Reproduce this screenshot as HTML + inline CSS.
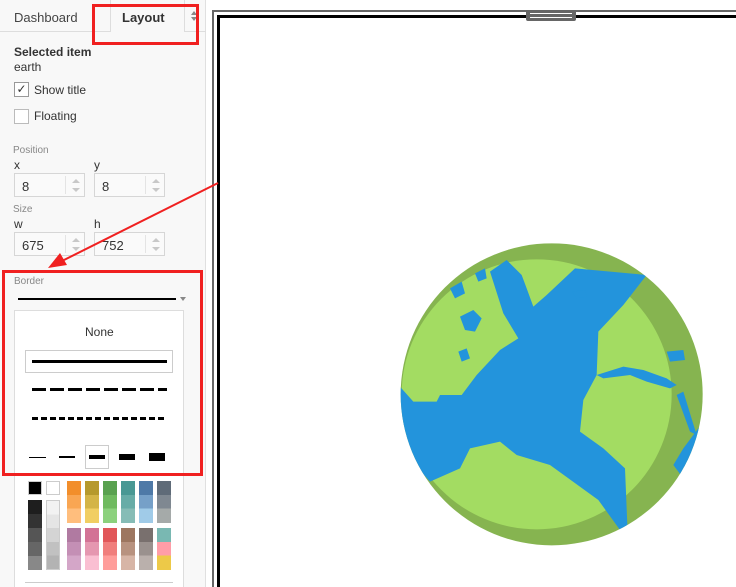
<!DOCTYPE html>
<html><head><style>
*{margin:0;padding:0;box-sizing:border-box}
html,body{width:736px;height:587px;overflow:hidden}
body{background:#fff;font-family:"Liberation Sans",sans-serif;position:relative;color:#333}
.a{position:absolute}
.sb{left:0;top:0;width:206px;height:587px;background:#f8f8f8;border-right:1px solid #e0e0e0}
.inp{position:absolute;width:71px;height:24px;border:1px solid #d6d6d6;background:#fafafa;font-size:13px;padding:5px 0 0 7px;color:#333}
.inp:after{content:"";position:absolute;left:50px;top:2px;width:1px;height:18px;background:#e4e4e4}
.up,.dn{position:absolute;left:57px;width:0;height:0;border-left:4px solid transparent;border-right:4px solid transparent}
.up{top:5px;border-bottom:4px solid #c8c8c8}.dn{top:14px;border-top:4px solid #c8c8c8}
.sw{position:absolute;width:14px}
</style></head><body>
<div class="a sb"></div>
<div class="a" style="left:0;top:0;width:206px;height:32px;border-bottom:1px solid #ddd"></div>
<div class="a" style="left:110px;top:0;width:75px;height:32px;border-left:1px solid #ddd;border-right:1px solid #ddd;background:#f8f8f8"></div>
<div class="a" style="left:14px;top:10px;font-size:13px;color:#444">Dashboard</div>
<div class="a" style="left:122px;top:10px;font-size:13px;font-weight:bold;color:#333">Layout</div>
<div class="a" style="left:191px;top:11px;width:0;border-left:3px solid transparent;border-right:3px solid transparent;border-bottom:4px solid #888"></div>
<div class="a" style="left:191px;top:17px;width:0;border-left:3px solid transparent;border-right:3px solid transparent;border-top:4px solid #888"></div>
<div class="a" style="left:92px;top:4px;width:107px;height:41px;border:3px solid #f02020"></div>

<div class="a" style="left:14px;top:45px;font-size:12px;font-weight:bold;color:#333">Selected item</div>
<div class="a" style="left:14px;top:60px;font-size:12px;color:#333">earth</div>
<div class="a" style="left:14px;top:82px;width:15px;height:15px;border:1px solid #999;background:#fff;font-size:12px;line-height:13px;text-align:center">✓</div>
<div class="a" style="left:34px;top:83px;font-size:12px">Show title</div>
<div class="a" style="left:14px;top:109px;width:15px;height:15px;border:1px solid #bbb;background:#fff"></div>
<div class="a" style="left:34px;top:109px;font-size:12px">Floating</div>
<div class="a" style="left:13px;top:145px;font-size:10px;color:#888">Position</div>
<div class="a" style="left:14px;top:158px;font-size:12px">x</div>
<div class="a" style="left:94px;top:158px;font-size:12px">y</div>
<div class="inp" style="left:14px;top:173px">8<i class="up"></i><i class="dn"></i></div>
<div class="inp" style="left:94px;top:173px">8<i class="up"></i><i class="dn"></i></div>
<div class="a" style="left:13px;top:204px;font-size:10px;color:#888">Size</div>
<div class="a" style="left:14px;top:217px;font-size:12px">w</div>
<div class="a" style="left:94px;top:217px;font-size:12px">h</div>
<div class="inp" style="left:14px;top:232px">675<i class="up"></i><i class="dn"></i></div>
<div class="inp" style="left:94px;top:232px">752<i class="up"></i><i class="dn"></i></div>

<div class="a" style="left:14px;top:276px;font-size:10px;color:#888">Border</div>
<div class="a" style="left:18px;top:298px;width:158px;height:2px;background:#000"></div>
<div class="a" style="left:180px;top:297px;width:0;border-left:3px solid transparent;border-right:3px solid transparent;border-top:4px solid #888"></div>
<div class="a" style="left:14px;top:310px;width:170px;height:290px;background:#fff;border:1px solid #ddd"></div>
<div class="a" style="left:85px;top:325px;font-size:12px;color:#333">None</div>
<div class="a" style="left:25px;top:350px;width:148px;height:23px;border:1px solid #ccc"></div>
<div class="a" style="left:32px;top:360px;width:135px;height:3px;background:#000"></div>
<div class="a" style="left:32px;top:388px;width:135px;height:3px;background:repeating-linear-gradient(90deg,#000 0 14px,transparent 14px 18px)"></div>
<div class="a" style="left:32px;top:417px;width:133px;height:3px;background:repeating-linear-gradient(90deg,#000 0 6px,transparent 6px 9px)"></div>
<div class="a" style="left:29px;top:457px;width:17px;height:1px;background:#000"></div>
<div class="a" style="left:59px;top:456px;width:16px;height:2px;background:#000"></div>
<div class="a" style="left:85px;top:445px;width:24px;height:24px;border:1px solid #ccc"></div>
<div class="a" style="left:89px;top:455px;width:16px;height:4px;background:#000"></div>
<div class="a" style="left:119px;top:454px;width:16px;height:6px;background:#000"></div>
<div class="a" style="left:149px;top:453px;width:16px;height:8px;background:#000"></div>
<div class="a" style="left:2px;top:270px;width:201px;height:206px;border:3px solid #f02020"></div>

<div class="sw" style="left:28px;top:481px;height:14px;background:#000;border:1px solid #ccc"></div>
<div class="sw" style="left:46px;top:481px;height:14px;background:#fff;border:1px solid #ccc"></div>
<div class="a" style="left:28px;top:500px;width:14px;height:70px;background:linear-gradient(#1e1e1e 0 20%,#333 20% 40%,#555 40% 60%,#666 60% 80%,#888 80%)"></div>
<div class="a" style="left:46px;top:500px;width:14px;height:70px;border:1px solid #ccc;background:linear-gradient(#f2f2f2 0 20%,#e5e5e5 20% 40%,#d4d4d4 40% 60%,#c1c1c1 60% 80%,#b3b3b3 80%)"></div>
<div class="sw" style="left:67px;top:481px;height:42px;background:linear-gradient(#f28e2b 0 33%,#f9a653 33% 66%,#ffbe7d 66%)"></div>
<div class="sw" style="left:85px;top:481px;height:42px;background:linear-gradient(#b6992d 0 33%,#d4b447 33% 66%,#f1ce63 66%)"></div>
<div class="sw" style="left:103px;top:481px;height:42px;background:linear-gradient(#59a14f 0 33%,#6fba5f 33% 66%,#8cd17d 66%)"></div>
<div class="sw" style="left:121px;top:481px;height:42px;background:linear-gradient(#499894 0 33%,#67aca7 33% 66%,#86bcb6 66%)"></div>
<div class="sw" style="left:139px;top:481px;height:42px;background:linear-gradient(#4e79a7 0 33%,#76a0c8 33% 66%,#a0cbe8 66%)"></div>
<div class="sw" style="left:157px;top:481px;height:42px;background:linear-gradient(#5f6b78 0 33%,#7f8891 33% 66%,#a5aaa9 66%)"></div>
<div class="sw" style="left:67px;top:528px;height:42px;background:linear-gradient(#b07aa1 0 33%,#c48fb5 33% 66%,#d4a6c8 66%)"></div>
<div class="sw" style="left:85px;top:528px;height:42px;background:linear-gradient(#d37295 0 33%,#e597b0 33% 66%,#fabfd2 66%)"></div>
<div class="sw" style="left:103px;top:528px;height:42px;background:linear-gradient(#e15759 0 33%,#f07e7c 33% 66%,#ff9d9a 66%)"></div>
<div class="sw" style="left:121px;top:528px;height:42px;background:linear-gradient(#9d7660 0 33%,#b8927f 33% 66%,#d7b5a6 66%)"></div>
<div class="sw" style="left:139px;top:528px;height:42px;background:linear-gradient(#79706e 0 33%,#9a918e 33% 66%,#bab0ac 66%)"></div>
<div class="sw" style="left:157px;top:528px;height:42px;background:linear-gradient(#79b8b2 0 33%,#ff9da7 33% 66%,#edc948 66%)"></div>
<div class="a" style="left:25px;top:582px;width:148px;height:1px;background:#ccc"></div>

<div class="a" style="left:212px;top:10px;width:530px;height:590px;border-left:2px solid #666;border-top:2px solid #666"></div>
<div class="a" style="left:217px;top:15px;width:530px;height:590px;border-left:3px solid #000;border-top:3px solid #000"></div>
<div class="a" style="left:526px;top:10px;width:50px;height:11px;background:#666;border-radius:2px"></div>
<div class="a" style="left:530px;top:13px;width:42px;height:1px;background:#fff"></div>
<div class="a" style="left:530px;top:17px;width:42px;height:1px;background:#fff"></div>

<svg class="a" style="left:390px;top:235px" width="320" height="320" viewBox="0 0 960 960">
<defs><clipPath id="c"><circle cx="485" cy="478" r="453"/></clipPath></defs>
<g clip-path="url(#c)">
<rect width="960" height="960" fill="#86b450"/>
<circle cx="440" cy="478" r="405" fill="#a3dc62"/>
<path fill="#2394dc" d="M350 75 L395 120 L410 160 L430 215 L470 180 L555 100 L770 120 L700 210 L625 290 L620 420 L580 495 L570 590 L640 640 L705 700 L712 870 L690 885 L625 795 L480 690 L380 660 L330 620 L240 640 L210 700 L120 740 L30 640 L30 455 L70 500 L140 500 L150 480 L215 480 L260 420 L330 345 L385 310 L340 235 L300 110 Z"/>
<path fill="#2394dc" d="M620 420 L700 395 L760 405 L830 430 L860 450 L840 460 L770 440 L720 420 L640 430 Z"/>
<path fill="#2394dc" d="M210 245 L250 225 L275 250 L255 290 L225 285 Z"/>
<path fill="#2394dc" d="M830 350 L880 345 L885 375 L840 380 Z"/>
<path fill="#2394dc" d="M860 480 L900 590 L920 600 L880 470 Z"/>
<path fill="#2394dc" d="M850 690 L880 640 L940 560 L960 600 L880 730 Z"/>
<path fill="#2394dc" d="M545 170 L585 165 L590 185 L560 190 Z"/>
<path fill="#2394dc" d="M180 160 L215 140 L225 175 L195 190 Z M255 115 L285 100 L290 130 L265 140 Z M205 350 L230 340 L240 370 L215 380 Z"/>
</g></svg>

<svg class="a" style="left:0;top:0" width="736" height="587">
<line x1="218" y1="183" x2="62" y2="261" stroke="#f02020" stroke-width="2"/>
<polygon points="48,268 60,253 67,265" fill="#f02020"/>
</svg>
</body></html>
